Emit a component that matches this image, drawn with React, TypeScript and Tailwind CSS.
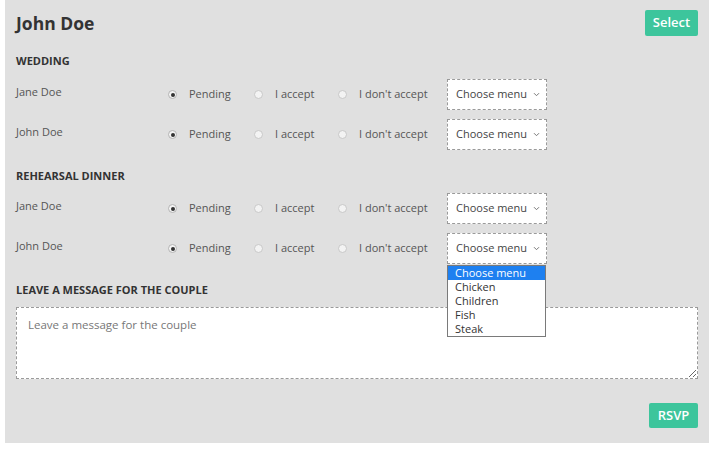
import React from "react";

const Radio = ({ checked }: { checked?: boolean }) => (
  <span
    className={
      checked
        ? "flex h-[9px] w-[9px] shrink-0 items-center justify-center rounded-full border border-[#b4b4b4] bg-[#f3f3f3]"
        : "flex h-[9px] w-[9px] shrink-0 items-center justify-center rounded-full border border-[#c8c8c8] bg-[#f3f3f3]"
    }
  >
    {checked && <span className="h-[4px] w-[4px] rounded-full bg-[#333]" />}
  </span>
);

const Chevron = () => (
  <svg width="7" height="5" viewBox="0 0 7 5" className="text-[#777]">
    <path d="M1 1.2 L3.5 3.7 L6 1.2" fill="none" stroke="currentColor" strokeWidth="1" />
  </svg>
);

const options = ["Choose menu", "Chicken", "Children", "Fish", "Steak"];

const Row = ({ name, open }: { name: string; open?: boolean }) => (
  <div className="flex h-[31px] items-center whitespace-nowrap text-[11px] text-[#555]">
    <div className="mb-[4px] w-[152px] shrink-0">{name}</div>
    <div className="flex w-[86px] shrink-0 items-center gap-[12px]">
      <Radio checked />
      <span>Pending</span>
    </div>
    <div className="flex w-[84px] shrink-0 items-center gap-[12px]">
      <Radio />
      <span>I accept</span>
    </div>
    <div className="flex w-[109px] shrink-0 items-center gap-[12px]">
      <Radio />
      <span>I don't accept</span>
    </div>
    <div className="relative h-[31px] w-[100px] shrink-0">
      <div className="flex h-full w-full items-center justify-between border border-dashed border-[#9a9a9a] bg-white pl-[8px] pr-[6px] text-[11px] text-[#444]">
        <span>Choose menu</span>
        <Chevron />
      </div>
      {open && (
        <div className="absolute left-0 top-[32px] z-10 w-[99px] border border-[#7a7a7a] bg-white text-[11px] leading-[14px] text-[#333]">
          {options.map((o, i) => (
            <div
              key={o}
              className={
                i === 0
                  ? "h-[14px] bg-[#1e80f0] pl-[7px] text-white"
                  : "h-[14px] pl-[7px]"
              }
            >
              {o}
            </div>
          ))}
        </div>
      )}
    </div>
  </div>
);

export default function App() {
  return (
    <div
      className="h-[451px] w-[720px] bg-white"
      style={{ fontFamily: '"Open Sans", "Noto Sans", sans-serif' }}
    >
      <div className="ml-[5px] flex h-[443px] w-[704px] flex-col bg-[#e0e0e0] px-[11px] pt-[10px]">
        <div className="flex h-[26px] items-center justify-between">
          <h1 className="text-[17.5px] font-bold leading-[26px] text-[#333]">John Doe</h1>
          <button className="h-[26px] w-[53px] rounded-[2px] bg-[#3dc59c] text-[13px] font-semibold text-white">
            Select
          </button>
        </div>

        <div className="mt-[17px] text-[11px] font-bold leading-[16px] text-[#333]">
          WEDDING
        </div>
        <div className="mt-[10px] flex flex-col gap-[9px]">
          <Row name="Jane Doe" />
          <Row name="John Doe" />
        </div>

        <div className="mt-[18px] text-[11px] font-bold leading-[16px] text-[#333]">
          REHEARSAL DINNER
        </div>
        <div className="mt-[9px] flex flex-col gap-[9px]">
          <Row name="Jane Doe" />
          <Row name="John Doe" open />
        </div>

        <div className="mt-[18px] text-[11px] font-bold leading-[16px] text-[#333]">
          LEAVE A MESSAGE FOR THE COUPLE
        </div>
        <textarea
          className="mt-[9px] h-[72px] w-[682px] border border-dashed border-[#9a9a9a] bg-white px-[11px] py-[9px] text-[11.5px] leading-[16px] text-[#555] outline-none placeholder:text-[#777]"
          placeholder="Leave a message for the couple"
        />

        <div className="mt-[24px] flex justify-end">
          <button className="h-[25px] w-[49px] rounded-[2px] bg-[#3dc59c] text-[13px] font-semibold text-white">
            RSVP
          </button>
        </div>
      </div>
    </div>
  );
}
